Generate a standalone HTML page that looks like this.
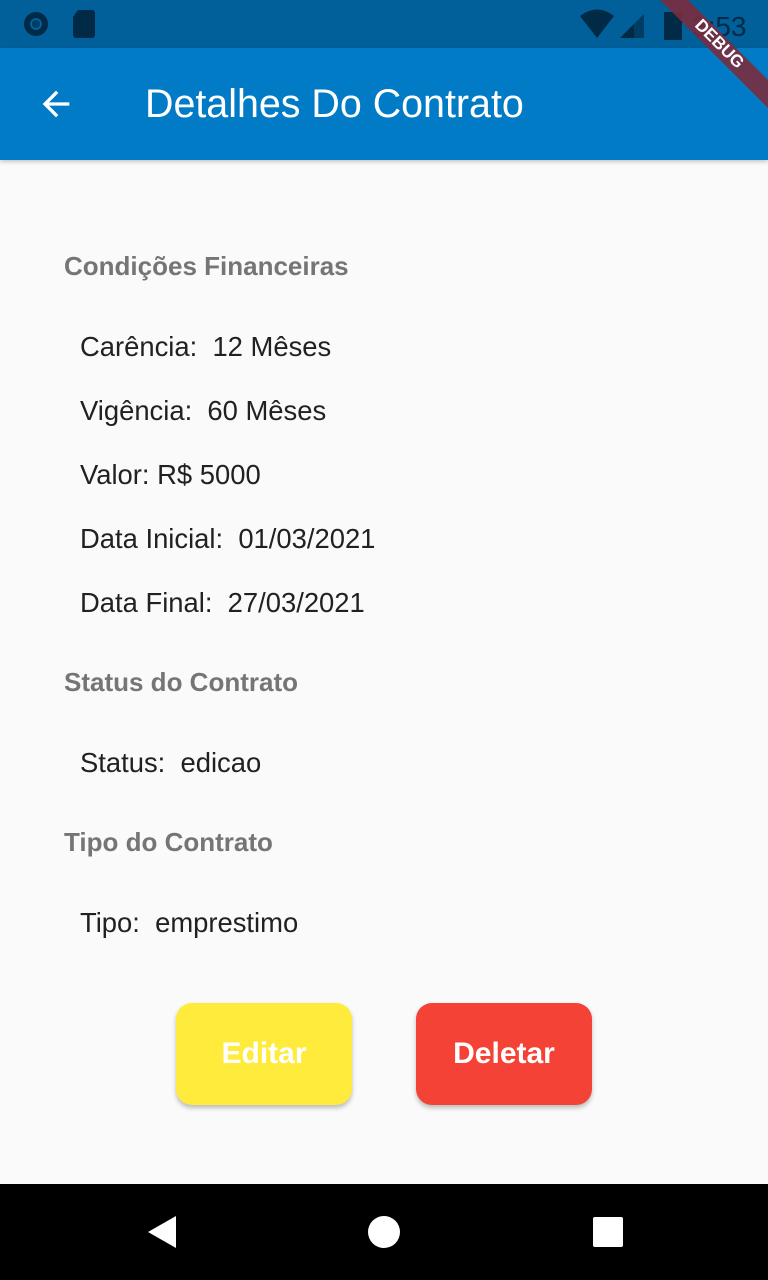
<!DOCTYPE html>
<html><head><meta charset="utf-8"><style>
*{margin:0;padding:0;box-sizing:border-box}
body{width:768px;height:1280px;background:#fafafa;font-family:"Liberation Sans",sans-serif;position:relative;overflow:hidden}
.sb{position:absolute;top:0;left:0;width:768px;height:48px;background:#015f99}
.ab{position:absolute;top:48px;left:0;width:768px;height:112px;background:#017bc6;box-shadow:0 2px 4px rgba(0,0,0,.2)}
.t{position:absolute;white-space:nowrap;line-height:1}
.h{color:#757575;font-weight:bold;font-size:26px;left:64px}
.i{color:#212121;font-size:27.4px;left:80px}
.btn{position:absolute;top:1003px;width:176px;height:102px;border-radius:16px;color:#fff;font-weight:bold;font-size:30px;display:flex;align-items:center;justify-content:center;box-shadow:0 3px 5px rgba(0,0,0,.25)}
.nav{position:absolute;top:1184px;left:0;width:768px;height:96px;background:#000}
</style></head><body>
<div class="sb">
<svg width="768" height="48" style="position:absolute;left:0;top:0">
<circle cx="36" cy="24" r="12" fill="#002a45"/><circle cx="36" cy="24" r="6" fill="#015f99"/><circle cx="36" cy="24" r="4" fill="#003d63"/>
<path d="M78 10h14a3 3 0 0 1 3 3v22a3 3 0 0 1-3 3H76a3 3 0 0 1-3-3V17z" fill="#002a45"/>
<path d="M580 16q17-13 34 0l-17 22z" fill="#002a45"/>
<path d="M620 38l24-24v24z" fill="#003d63"/><path d="M620 38l14-14v14z" fill="#002a45"/>
<rect x="664" y="12" width="18" height="28" fill="#002a45"/>
<text x="692" y="36" font-family="Liberation Sans" font-size="28" fill="#002a45">3:53</text>
</svg></div>
<div class="ab">
<svg width="40" height="40" style="position:absolute;left:36px;top:36px" viewBox="0 0 24 24"><path d="M20 11H7.8l5.6-5.6L12 4l-8 8 8 8 1.4-1.4L7.8 13H20z" fill="#fff"/></svg>
<div class="t" style="left:145px;top:37px;color:#fff;font-size:39.4px">Detalhes Do Contrato</div>
</div>
<svg width="768" height="160" style="position:absolute;left:0;top:0">
<path d="M660 0h28l80 80v28z" fill="#7a2c3e" fill-opacity="0.9"/>
<text x="0" y="0" font-family="Liberation Sans" font-weight="bold" font-size="17" fill="#fff" transform="translate(694 26) rotate(45)">DEBUG</text>
</svg>
<div class="t h" style="top:253px">Condições Financeiras</div>
<div class="t i" style="top:333px">Carência:&nbsp; 12 Mêses</div>
<div class="t i" style="top:397px">Vigência:&nbsp; 60 Mêses</div>
<div class="t i" style="top:461px">Valor: R$ 5000</div>
<div class="t i" style="top:525px">Data Inicial:&nbsp; 01/03/2021</div>
<div class="t i" style="top:589px">Data Final:&nbsp; 27/03/2021</div>
<div class="t h" style="top:669px">Status do Contrato</div>
<div class="t i" style="top:749px">Status:&nbsp; edicao</div>
<div class="t h" style="top:829px">Tipo do Contrato</div>
<div class="t i" style="top:909px">Tipo:&nbsp; emprestimo</div>
<div class="btn" style="left:176px;background:#ffeb3b">Editar</div>
<div class="btn" style="left:416px;background:#f44336">Deletar</div>
<div class="nav">
<svg width="768" height="96" style="position:absolute;left:0;top:0">
<path d="M176 32v32l-28-16z" fill="#fff"/>
<circle cx="384" cy="48" r="16" fill="#fff"/>
<rect x="593" y="33" width="30" height="30" rx="2" fill="#fff"/>
</svg></div>
</body></html>
